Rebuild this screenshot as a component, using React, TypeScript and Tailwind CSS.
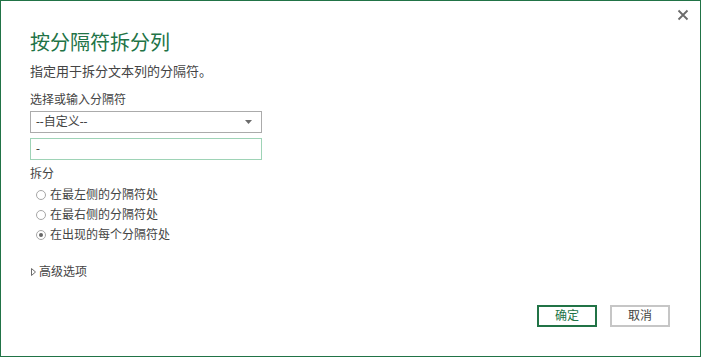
import { useState } from "react";

const options = ["在最左侧的分隔符处", "在最右侧的分隔符处", "在出现的每个分隔符处"];

export default function App() {
  const [selected, setSelected] = useState(2);

  return (
    <div className="relative flex h-[357px] w-[701px] flex-col border border-[#217346] bg-white pl-[29px] pr-[30px] pb-[29px] pt-[30px] font-['Noto_Sans','Noto_Sans_CJK_SC',sans-serif] text-[#444444]">
      <button className="absolute right-[11px] top-[8px] text-[#6b6b6b]">
        <svg width="12" height="12" viewBox="0 0 12 12">
          <path d="M1.5 1.5 L10.5 10.5 M10.5 1.5 L1.5 10.5" stroke="currentColor" strokeWidth="1.8" />
        </svg>
      </button>

      <h1 className="text-[20px] leading-[24px] text-[#217346]">按分隔符拆分列</h1>
      <p className="mt-[8px] text-[13px] leading-[16px]">指定用于拆分文本列的分隔符。</p>

      <label className="mt-[13px] text-[12px] leading-[16px]">选择或输入分隔符</label>
      <div className="mt-[3px] flex h-[22px] w-[232px] items-center justify-between border border-[#ababab] pl-[5px] pr-[9px] text-[12px]">
        <span>--自定义--</span>
        <svg width="7" height="4" viewBox="0 0 7 4">
          <path d="M0 0 H7 L3.5 4 Z" fill="#6b6b6b" />
        </svg>
      </div>
      <div className="mt-[5px] flex h-[22px] w-[232px] items-center border border-[#9ed3b6] pl-[5px] text-[12px]">
        -
      </div>

      <div className="mt-[6px] text-[12px] leading-[16px]">拆分</div>
      <div className="mt-[3px] flex flex-col">
        {options.map((o, i) => (
          <div
            key={o}
            className="flex h-[20px] cursor-pointer items-center gap-[4px] pl-[6px] text-[12px]"
            onClick={() => setSelected(i)}
          >
            <span className="flex h-[10px] w-[10px] items-center justify-center rounded-full border border-[#a6a6a6] bg-white">
              {selected === i && <span className="h-[4px] w-[4px] rounded-full bg-[#666666]" />}
            </span>
            <span>{o}</span>
          </div>
        ))}
      </div>

      <div className="mt-[19px] flex h-[16px] items-center gap-[3px] pl-[1px] text-[12px]">
        <svg width="5" height="8" viewBox="0 0 5 8">
          <path d="M0.5 0.5 L4.5 4 L0.5 7.5 Z" fill="none" stroke="#6b6b6b" strokeWidth="1" />
        </svg>
        <span>高级选项</span>
      </div>

      <div className="mt-auto flex justify-end gap-[13px]">
        <button className="h-[22px] w-[60px] border-2 border-[#217346] text-[12px] text-[#217346]">确定</button>
        <button className="h-[22px] w-[60px] border-2 border-[#c6c6c6] text-[12px] text-[#444444]">取消</button>
      </div>
    </div>
  );
}
